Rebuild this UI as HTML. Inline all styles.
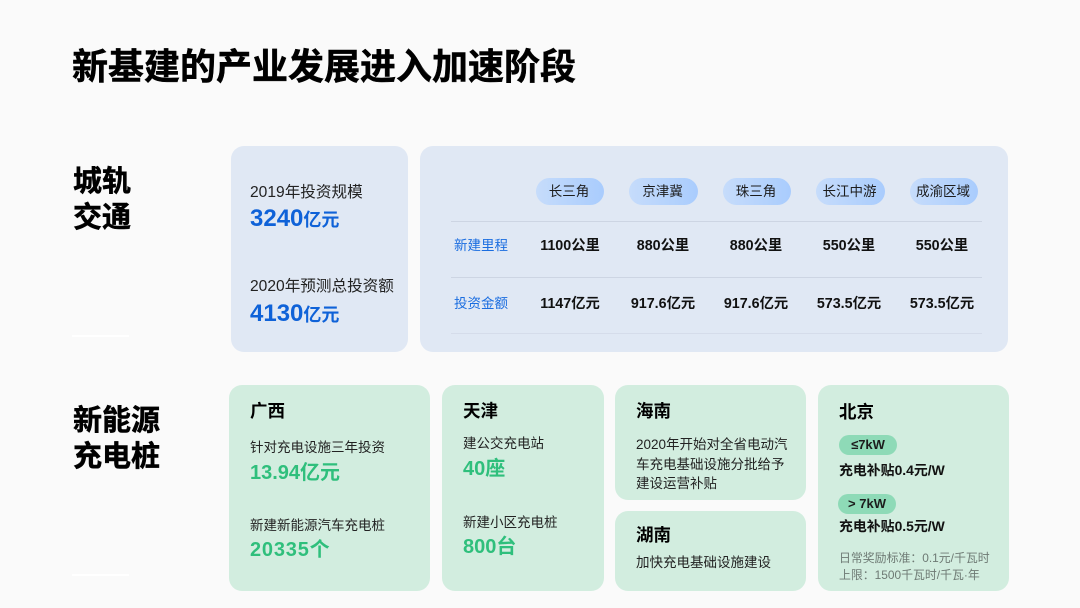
<!DOCTYPE html>
<html><head><meta charset="utf-8"><style>
html,body{margin:0;padding:0}
body{width:1080px;height:608px;background:#fafafa;position:relative;overflow:hidden;font-family:"Liberation Sans","Noto Sans CJK SC",sans-serif;color:#1c1c1c}
.c,.t,.l,.p{position:absolute}
.t{white-space:nowrap;line-height:1.2}
.blue{background:#e0e8f4;border-radius:13px}
.green{background:#d2eddf;border-radius:13px}
.h{font-weight:700;color:#000;-webkit-text-stroke:.5px #000}
.bv{font-size:24px;font-weight:700;color:#0f62d8;line-height:29px}
.bv small{font-size:18px}
.gv{font-size:20px;font-weight:700;color:#2fbf7c}
.g{font-size:13.5px;color:#222}
.gh{font-size:17.5px;font-weight:700;color:#000}
.p{width:68px;height:27px;border-radius:14px;background:linear-gradient(90deg,#c6dcfb,#a9ccfd);top:178px;text-align:center;font-size:13.5px;line-height:27px;color:#1c1c1c;text-indent:-2px}
.l{left:451px;width:531px;height:1px;background:#cdd5e3}
.m{position:absolute;width:90px;text-align:center;font-size:14.3px;font-weight:700;color:#111;white-space:nowrap;line-height:18px}
.r{font-size:13.5px;color:#1a6de0}
.s{font-size:13.9px;font-weight:700;color:#111}
.n{font-size:11.9px;color:#6e7a74}
</style></head><body>
<div class="t h" style="left:72px;top:45px;font-size:36px">新基建的产业发展进入加速阶段</div>
<div class="t h" style="left:73px;top:164px;font-size:29px;line-height:36px;white-space:normal;width:60px">城轨<br>交通</div>
<div class="l" style="left:72px;top:335px;width:57px;height:2px;background:#fff"></div>
<div class="t h" style="left:73px;top:403px;font-size:29px;line-height:36px;white-space:normal;width:90px">新能源<br>充电桩</div>
<div class="l" style="left:72px;top:574px;width:57px;height:2px;background:#fff"></div>

<div class="c blue" style="left:231px;top:146px;width:177px;height:206px"></div>
<div class="t" style="left:250px;top:184px;font-size:15.6px;color:#222">2019年投资规模</div>
<div class="t bv" style="left:250px;top:204px">3240<small>亿元</small></div>
<div class="t" style="left:250px;top:278px;font-size:15.6px;color:#222">2020年预测总投资额</div>
<div class="t bv" style="left:250px;top:299px">4130<small>亿元</small></div>

<div class="c blue" style="left:420px;top:146px;width:588px;height:206px"></div>
<div class="p" style="left:536px">长三角</div>
<div class="p" style="left:629px;width:69px">京津冀</div>
<div class="p" style="left:723px">珠三角</div>
<div class="p" style="left:816px;width:69px">长江中游</div>
<div class="p" style="left:910px">成渝区域</div>
<div class="l" style="top:221px"></div>
<div class="l" style="top:277px"></div>
<div class="l" style="top:333px;background:#d5dcea"></div>
<div class="t r" style="left:454px;top:238px">新建里程</div>
<div class="t r" style="left:454px;top:296px">投资金额</div>
<div class="m" style="left:525px;top:237px">1100公里</div>
<div class="m" style="left:618px;top:237px">880公里</div>
<div class="m" style="left:711px;top:237px">880公里</div>
<div class="m" style="left:804px;top:237px">550公里</div>
<div class="m" style="left:897px;top:237px">550公里</div>
<div class="m" style="left:525px;top:295px">1147亿元</div>
<div class="m" style="left:618px;top:295px">917.6亿元</div>
<div class="m" style="left:711px;top:295px">917.6亿元</div>
<div class="m" style="left:804px;top:295px">573.5亿元</div>
<div class="m" style="left:897px;top:295px">573.5亿元</div>

<div class="c green" style="left:229px;top:385px;width:201px;height:206px"></div>
<div class="t gh" style="left:250px;top:401px">广西</div>
<div class="t g" style="left:250px;top:440px">针对充电设施三年投资</div>
<div class="t gv" style="left:250px;top:461px">13.94亿元</div>
<div class="t g" style="left:250px;top:518px">新建新能源汽车充电桩</div>
<div class="t gv" style="left:250px;top:538px;letter-spacing:.8px">20335个</div>

<div class="c green" style="left:442px;top:385px;width:162px;height:206px"></div>
<div class="t gh" style="left:463px;top:401px">天津</div>
<div class="t g" style="left:463px;top:436px">建公交充电站</div>
<div class="t gv" style="left:463px;top:457px">40座</div>
<div class="t g" style="left:463px;top:515px">新建小区充电桩</div>
<div class="t gv" style="left:463px;top:535px">800台</div>

<div class="c green" style="left:615px;top:385px;width:191px;height:115px"></div>
<div class="t gh" style="left:636px;top:401px">海南</div>
<div class="t g" style="left:636px;top:435px;line-height:19.7px;white-space:normal;width:160px">2020年开始对全省电动汽<br>车充电基础设施分批给予<br>建设运营补贴</div>

<div class="c green" style="left:615px;top:511px;width:191px;height:80px"></div>
<div class="t gh" style="left:636px;top:525px">湖南</div>
<div class="t g" style="left:636px;top:555px">加快充电基础设施建设</div>

<div class="c green" style="left:818px;top:385px;width:191px;height:206px"></div>
<div class="t gh" style="left:839px;top:402px">北京</div>
<div class="c" style="left:839px;top:435px;width:58px;height:20px;border-radius:10px;background:#8edab7;text-align:center;font-size:13px;line-height:20px;font-weight:700;color:#1c1c1c">≤7kW</div>
<div class="t s" style="left:839px;top:462px">充电补贴0.4元/W</div>
<div class="c" style="left:838px;top:494px;width:58px;height:20px;border-radius:10px;background:#8edab7;text-align:center;font-size:13px;line-height:20px;font-weight:700;color:#1c1c1c">&gt; 7kW</div>
<div class="t s" style="left:839px;top:518px">充电补贴0.5元/W</div>
<div class="t n" style="left:839px;top:551px">日常奖励标准：0.1元/千瓦时</div>
<div class="t n" style="left:839px;top:568px">上限：1500千瓦时/千瓦·年</div>
</body></html>
